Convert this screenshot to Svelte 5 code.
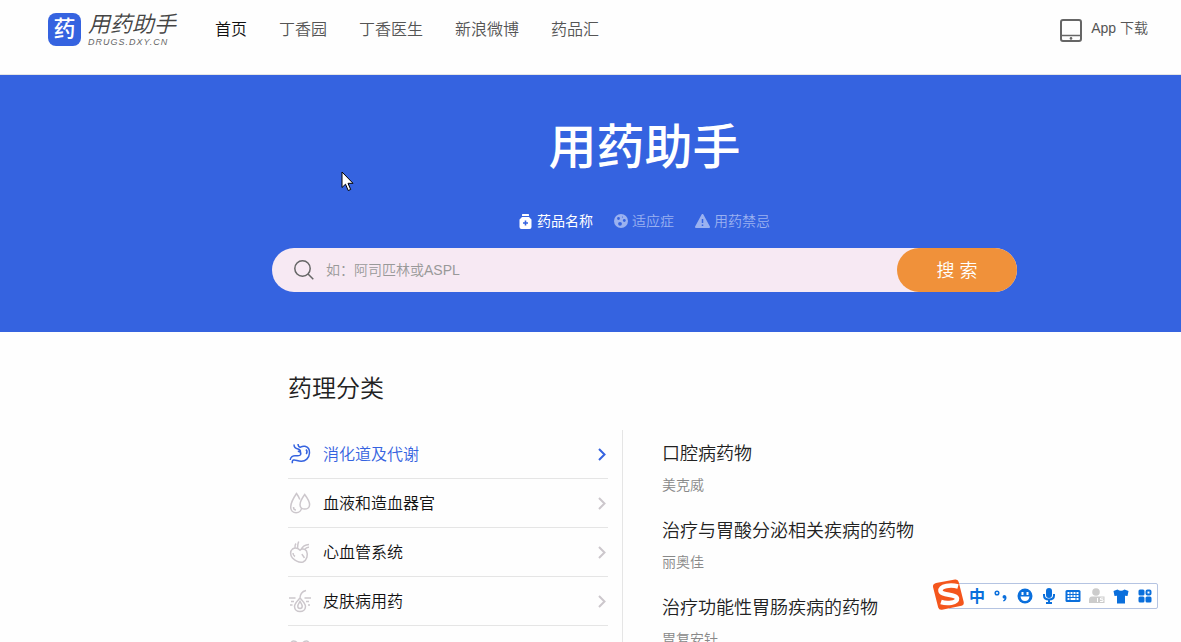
<script>
  const navItems = ['首页', '丁香园', '丁香医生', '新浪微博', '药品汇'];

  const tabs = [
    { id: 'name', label: '药品名称' },
    { id: 'indication', label: '适应症' },
    { id: 'taboo', label: '用药禁忌' }
  ];

  const categories = [
    { icon: 'stomach', label: '消化道及代谢' },
    { icon: 'blood', label: '血液和造血器官' },
    { icon: 'heart', label: '心血管系统' },
    { icon: 'skin', label: '皮肤病用药' },
    { icon: 'kidney', label: '泌尿生殖系统和性激素' }
  ];

  const drugs = [
    { title: '口腔病药物', sample: '美克威' },
    { title: '治疗与胃酸分泌相关疾病的药物', sample: '丽奥佳' },
    { title: '治疗功能性胃肠疾病的药物', sample: '胃复安针' }
  ];

  let activeTab = 'name';
  let activeCategory = 0;
  let keyword = '';
</script>

<div class="page">
  <header class="header">
    <a class="brand" href="#home">
      <span class="brand-mark">药</span>
      <span class="brand-text">
        <span class="brand-name">用药助手</span>
        <span class="brand-domain">DRUGS.DXY.CN</span>
      </span>
    </a>
    <nav class="nav">
      {#each navItems as item, index}
        <a href="#nav{index}" class:current={index === 0}>{item}</a>
      {/each}
    </nav>
    <a class="download" href="#app">
      <svg width="22" height="24" viewBox="0 0 22 24" fill="none" stroke="#666" stroke-width="2">
        <rect x="1" y="1" width="20" height="21" rx="2" />
        <path d="M1 16.5h20" stroke-width="1.5" />
        <circle cx="11" cy="19.4" r="1.3" fill="#666" stroke="none" />
      </svg>
      App 下载
    </a>
  </header>

  <section class="banner">
    <h1>用药助手</h1>
    <div class="tabs">
      {#each tabs as tab}
        <button class="tab" class:active={activeTab === tab.id} on:click={() => (activeTab = tab.id)}>
          {#if tab.id === 'name'}
            <svg width="14" height="15" viewBox="0 0 14 15" fill="currentColor">
              <rect x="3" y="0" width="7" height="2" rx="0.5" />
              <path fill-rule="evenodd" d="M3 3h7l2.500 2.500v7.500q0 2-2 2H2.500q-2 0-2-2V5.500zM5.700 6.500v1.700H4v1.600h1.700v1.700h1.600V9.800H9V8.200H7.300V6.500z" />
            </svg>
          {:else if tab.id === 'indication'}
            <svg width="14" height="14" viewBox="0 0 14 14">
              <circle cx="7" cy="7" r="7" fill="currentColor" />
              <g fill="#3563e0">
                <circle cx="4.500" cy="4.500" r="1.400" />
                <circle cx="10.300" cy="6.500" r="1.400" />
                <circle cx="6" cy="9.800" r="1.900" />
                <circle cx="8.500" cy="3" r="0.600" />
              </g>
            </svg>
          {:else}
            <svg width="15" height="14" viewBox="0 0 15 14">
              <path d="M7.500 1L14 13H1z" fill="currentColor" stroke="currentColor" stroke-width="2" stroke-linejoin="round" />
              <path d="M7.500 5v4M7.500 10.500v1.500" stroke="#3563e0" stroke-width="1.500" />
            </svg>
          {/if}
          {tab.label}
        </button>
      {/each}
    </div>
    <form class="search" on:submit|preventDefault>
      <svg width="20" height="20" viewBox="0 0 20 20" fill="none" stroke="#666" stroke-width="1.500">
        <circle cx="8.500" cy="8.500" r="7.700" />
        <path d="M14 14l5.300 5.300" />
      </svg>
      <input type="text" aria-label="药品名称" placeholder="如：阿司匹林或ASPL" bind:value={keyword} />
      <button type="submit">搜 索</button>
    </form>
  </section>

  <main class="content">
    <h2>药理分类</h2>
    <div class="columns">
      <ul class="categories">
        {#each categories as category, index}
          <li>
            <button class:active={activeCategory === index} on:click={() => (activeCategory = index)}>
              <svg class="icon" width="24" height="24" viewBox="0 0 24 24">
                {#if category.icon === 'stomach'}
                  <path d="M6 2.500c0 2.500 1.500 4 4 4.500 1.500.4 2.500 1.500 2.500 2.800M10 2c.2 2 1 3.200 2.500 3.200C14 4.300 15.500 4 17 4.300c3 .7 4.700 3.400 4.500 6.700-.3 5-4 8.500-8.500 8.300-3.500-.1-5-1.500-7.300-1.200-1.500.3-1.700 1.900-1.200 3.200M2.200 18c.3-3 2.800-4.500 5.300-4.300 2.500.3 5 .5 5.300-1.700.1-1.300-1-2.500-3-2.700M18 7.500c1.200 1.300 1.200 3.200.2 4.500" />
                {:else if category.icon === 'blood'}
                  <path d="M13.500 16.500c0 3-2.400 5.200-5.400 5.200S2.700 19.500 2.700 16C2.700 11 8.500 2.500 8.500 2.500s2 2.700 3.300 6M16.700 3.500s-4.700 6.500-4.700 10.200c0 2.600 2.200 4.400 4.700 4.400s4.900-1.800 4.900-4.400c0-3.700-4.900-10.200-4.900-10.200zM5.500 16c0 1.700 1 3 2.500 3" />
                {:else if category.icon === 'heart'}
                  <path d="M4.500 9C2 11 2 15 4.500 18c3 3 7 4.700 10.500 4 4-2 5.300-7 3.500-11-1.600-2.400-5-2.500-6.500-.8-2-2-5.200-2.500-7.500-1.200zM7 8.500C6.700 6 7 4.500 8 3.500M9.500 8.300c.3-1.800 0-4 1.200-6.800M13 9.500c1.500-3 4-4.700 8-5M16.500 9.500c1.500-1.800 3-2.500 4.500-2.300M5 13c0 1.500.7 2.700 2 3.500M14 14c.5 1.500 1.700 2 2.300 4" />
                {:else if category.icon === 'skin'}
                  <path d="M1 9h6.500M16.500 9H23M3 12.500h3M2 16h2.500M18 12.500h3M20 16h2M18 1.500c-4.500 1-6 4.500-6 8M12 9c-2 2.500-5.500 5-5.500 8.500 0 3 2.500 5 5.500 5s5.500-2 5.500-5C17.500 14 14 11.500 12 9zM12 12.500c-1 1.700-2.200 3-2.200 4.800 0 1.300 1 2.200 2.200 2.200s2.200-.9 2.200-2.200c0-1.800-1.200-3.100-2.200-4.800z" />
                {:else}
                  <path d="M10 9c0-4-2-6-4.500-6S2 6 2 11s2 8 4 8 3-3 1.500-5M14 9c0-4 2-6 4.500-6S22 6 22 11s-2 8-4 8-3-3-1.500-5M10 9v13M14 9v13" />
                {/if}
              </svg>
              <span>{category.label}</span>
              <svg class="arrow" width="8" height="14" viewBox="0 0 8 14">
                <path d="M1 2L6.500 7.500L1 13" />
              </svg>
            </button>
          </li>
        {/each}
      </ul>
      <div class="drugs">
        {#each drugs as drug}
          <article>
            <h3>{drug.title}</h3>
            <p>{drug.sample}</p>
          </article>
        {/each}
      </div>
    </div>
  </main>

  <svg class="cursor" width="13" height="21" viewBox="0 0 13 21">
    <path d="M1 1v15.500l3.500-3.300 2.700 6.300 2.500-1-2.700-6.200h5z" fill="#fff" stroke="#000" stroke-width="1" />
  </svg>

  <div class="ime">
    <svg class="ime-logo" width="34" height="32" viewBox="0 0 34 32">
      <path d="M4 4L23 0.500Q26 0 26.700 3L31.700 23Q32.300 26 29.500 26.700L10 30.700Q7 31.200 6.200 28.500L1 8Q0.500 5 4 4z" fill="#f4561d" />
      <path d="M26 7.500C19 5.500 8 6.500 8.500 12c.5 4.500 16 3 16.500 7.500.3 4.500-10 5.500-16 3.500" fill="none" stroke="#fff" stroke-width="4.500" />
    </svg>
    <button class="ime-lang">中</button>
    <button aria-label="标点">
      <svg width="14" height="16" viewBox="0 0 14 16">
        <circle cx="3" cy="5" r="1.800" fill="none" stroke="currentColor" stroke-width="1.500" />
        <path d="M8.500 9q0-2 2-2t2 2.500q0 3-3 4l-.5-1q1.500-.7 1.500-2-2 0-2-1.500z" fill="currentColor" />
      </svg>
    </button>
    <button aria-label="表情">
      <svg width="16" height="16" viewBox="0 0 16 16">
        <circle cx="8" cy="8" r="7.500" fill="currentColor" />
        <path d="M4.500 4h2v3h-2zM9.500 4h2v3h-2zM3.500 8.500h9q-.7 4.500-4.500 4.500t-4.500-4.500z" fill="#fff" />
      </svg>
    </button>
    <button aria-label="语音">
      <svg width="14" height="16" viewBox="0 0 14 16" fill="none" stroke="currentColor">
        <rect x="4" y="0" width="6" height="10" rx="3" fill="currentColor" stroke="none" />
        <path d="M2 6v1.500q0 4 5 4t5-4V6M7 12v3M4 15h6" stroke-width="2" />
      </svg>
    </button>
    <button aria-label="键盘">
      <svg width="16" height="12" viewBox="0 0 16 12">
        <rect x="0.500" y="0" width="15" height="12" rx="1.500" fill="currentColor" />
        <path d="M2.500 3h11M2.500 6h11" stroke="#fff" stroke-width="2" stroke-dasharray="2 1" />
        <path d="M2.500 9h2M5.500 9h5M11.500 9h2" stroke="#fff" stroke-width="2" />
      </svg>
    </button>
    <button class="ime-user" aria-label="用户">
      <svg width="16" height="16" viewBox="0 0 16 16" fill="currentColor">
        <circle cx="7" cy="4" r="3.800" />
        <path d="M0 15v-3q0-3.500 3-3.500h12.500V15z" />
        <path d="M8.500 10v4M14.500 10h-3v1.700h2.500v1.800h-3" fill="none" stroke="#fff" />
      </svg>
    </button>
    <button aria-label="皮肤">
      <svg width="16" height="15" viewBox="0 0 16 15">
        <path d="M4.500.5q3.500 2.500 7 0l4 1.500-1 5-2.500-.3V14.500H4V6.700L1.500 7l-1-5z" fill="currentColor" />
      </svg>
    </button>
    <button aria-label="工具箱">
      <svg width="14" height="14" viewBox="0 0 14 14" fill="currentColor">
        <rect x="0.500" y="0.500" width="6" height="6" rx="1.500" />
        <rect x="0.500" y="7.500" width="6" height="6" rx="1.500" />
        <rect x="7.500" y="7.500" width="6" height="6" rx="1.500" />
        <rect x="8.500" y="1.500" width="4" height="4" rx="1" fill="none" stroke="currentColor" stroke-width="2" />
      </svg>
    </button>
  </div>
</div>

<style>
  :global(body) {
    background: #fefefe;
    overflow: hidden;
  }

  .page {
    position: relative;
    height: 100vh;
    overflow: hidden;
    color: #222;
    font-family: "Liberation Sans", "Noto Sans CJK SC", sans-serif;
    font-size: 16px;
    font-weight: 350;
  }

  button,
  input {
    font: inherit;
    border: none;
    padding: 0;
    background: none;
  }

  button {
    cursor: pointer;
  }

  a {
    color: inherit;
    text-decoration: none;
  }

  svg {
    flex: none;
  }

  .header {
    display: flex;
    align-items: flex-start;
    box-sizing: border-box;
    height: 75px;
    padding: 13px 33px 0 48px;
    border-bottom: 1px solid #e5e5e5;
    color: #555;
  }

  .brand {
    display: flex;
    gap: 7px;
    width: 136px;
    margin-right: 31px;
  }

  .brand-mark {
    width: 33px;
    height: 33px;
    border-radius: 8px;
    background: #3563e0;
    color: #fff;
    font-size: 22px;
    font-weight: 500;
    line-height: 32px;
    text-align: center;
  }

  .brand-text {
    display: flex;
    flex-direction: column;
    font-style: italic;
  }

  .brand-name {
    font-size: 22px;
    line-height: 24px;
    white-space: nowrap;
    color: #444;
  }

  .brand-domain {
    font-size: 9px;
    letter-spacing: 1px;
    line-height: 10px;
    color: #666;
  }

  .nav {
    display: flex;
    gap: 32px;
    line-height: 34px;
  }

  .nav .current {
    color: #111;
  }

  .download {
    display: flex;
    align-items: flex-start;
    gap: 9px;
    margin-left: auto;
    font-size: 14px;
    line-height: 30px;
  }

  .download svg {
    margin-top: 6px;
  }

  .banner {
    display: flex;
    flex-direction: column;
    align-items: center;
    padding: 45px 0 40px 108px;
    background: #3563e0;
    color: #fff;
  }

  h1 {
    margin: 0;
    font-size: 48px;
    font-weight: 500;
    line-height: 56px;
  }

  .tabs {
    display: flex;
    gap: 21px;
    margin: 35px 0 17px;
  }

  .tab {
    display: flex;
    align-items: center;
    gap: 4px;
    color: #9ab1f0;
    font-size: 14px;
    line-height: 20px;
  }

  .tab.active {
    color: #fff;
    font-weight: 400;
  }

  .search {
    display: flex;
    align-items: center;
    box-sizing: border-box;
    width: 745px;
    max-width: 100%;
    height: 44px;
    padding-left: 22px;
    border-radius: 22px;
    background: #f7e9f3;
  }

  .search input {
    flex: 1;
    min-width: 0;
    padding-left: 12px;
    font-size: 14px;
    outline: none;
  }

  .search input::placeholder {
    color: #999;
    opacity: 1;
  }

  .search button {
    width: 120px;
    height: 44px;
    padding-bottom: 2px;
    border-radius: 22px;
    background: #f0913a;
    color: #fff;
    font-size: 18px;
  }

  .content {
    max-width: 713px;
    margin: 0 auto;
    padding: 40px 0 0 108px;
  }

  h2 {
    margin: 0 0 24px;
    font-size: 24px;
    font-weight: 350;
    line-height: 34px;
  }

  .columns {
    display: flex;
    gap: 14px;
  }

  .categories {
    flex: none;
    width: 320px;
    margin: 0;
    padding: 0;
    list-style: none;
  }

  .categories li {
    border-bottom: 1px solid #e5e5e5;
  }

  .categories button {
    display: flex;
    align-items: center;
    gap: 11px;
    width: 100%;
    height: 48px;
    padding-right: 2px;
    color: #111;
    text-align: left;
  }

  .categories span {
    flex: 1;
    padding-bottom: 2px;
  }

  .categories svg {
    fill: none;
    stroke: #ccc7cc;
    stroke-width: 1.5;
  }

  .categories .arrow {
    stroke-width: 2;
  }

  .categories .active {
    color: #3563e0;
  }

  .categories .active svg {
    stroke: #3563e0;
  }

  .drugs {
    flex: 1;
    padding: 10px 0 0 39px;
    border-left: 1px solid #e5e5e5;
  }

  article {
    margin-bottom: 22px;
  }

  h3 {
    margin: 0 0 7px;
    font-size: 18px;
    font-weight: 350;
    line-height: 28px;
  }

  p {
    margin: 0;
    color: #888;
    font-size: 14px;
    line-height: 20px;
  }

  .cursor {
    position: absolute;
    top: 171px;
    left: 341px;
  }

  .ime {
    position: absolute;
    right: 23px;
    bottom: 33px;
    display: flex;
    align-items: center;
    height: 24px;
    padding-left: 16px;
    border: 1px solid #b5c4e2;
    border-radius: 2px;
    background: #fff;
    color: #0a6fdc;
  }

  .ime-logo {
    position: absolute;
    top: -5px;
    left: -17px;
  }

  .ime button {
    display: flex;
    align-items: center;
    justify-content: center;
    width: 24px;
    height: 24px;
    color: inherit;
  }

  .ime .ime-lang {
    padding-bottom: 2px;
    box-sizing: border-box;
    font-size: 16px;
    font-weight: 700;
  }

  .ime .ime-user {
    color: #ccc;
  }
</style>
